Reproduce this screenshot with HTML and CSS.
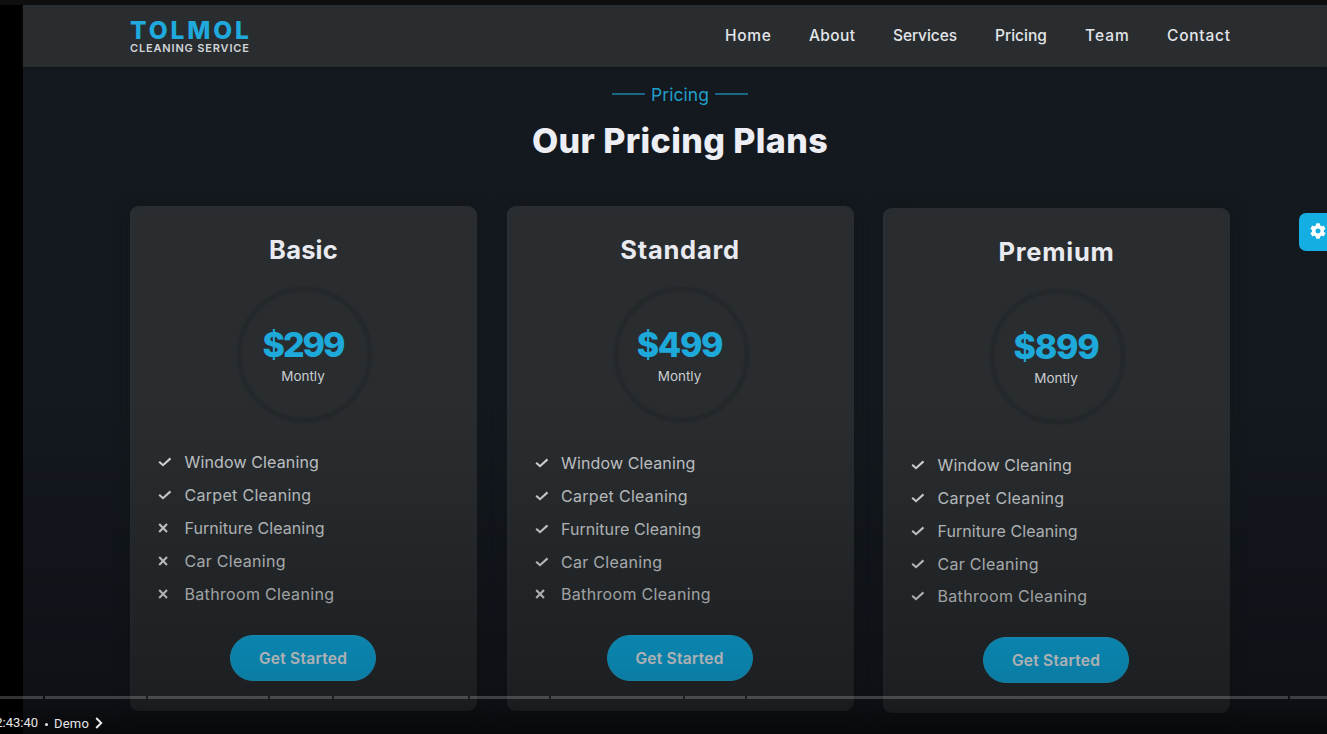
FILE: index.html
```html
<!DOCTYPE html>
<html lang="en">
<head>
<meta charset="utf-8">
<title>Our Pricing Plans</title>
<link rel="stylesheet" href="styles.css">
</head>
<body>
<svg class="defs" width="0" height="0">
  <symbol id="check" viewBox="0 0 14 10"><path d="M1.200 4.800 5 8.200 12.500 1.400"/></symbol>
  <symbol id="cross" viewBox="0 0 14 10"><path d="M1.200 1 9 9M9 1 1.200 9"/></symbol>
</svg>
<div class="player">
  <div class="page">
    <header class="header">
      <div class="container bar">
        <div class="logo"><span class="logo-name">TOLMOL</span><span class="logo-sub">CLEANING SERVICE</span></div>
        <nav class="nav">
          <a class="n-home">Home</a><a class="n-about">About</a><a class="n-services">Services</a><a class="n-pricing">Pricing</a><a class="n-team">Team</a><a class="n-contact">Contact</a>
        </nav>
      </div>
    </header>
    <main class="container">
      <div class="label"><i></i><span>Pricing</span><i></i></div>
      <h2 class="heading">Our Pricing Plans</h2>
      <div class="cards">
        <section class="card basic">
          <h3>Basic</h3>
          <div class="price"><strong>$299</strong><span>Montly</span></div>
          <ul>
            <li class="l-window"><svg><use href="#check"/></svg>Window Cleaning</li>
            <li class="l-carpet"><svg><use href="#check"/></svg>Carpet Cleaning</li>
            <li class="l-furniture"><svg><use href="#cross"/></svg>Furniture Cleaning</li>
            <li class="l-car"><svg><use href="#cross"/></svg>Car Cleaning</li>
            <li class="l-bath"><svg><use href="#cross"/></svg>Bathroom Cleaning</li>
          </ul>
          <a class="button">Get Started</a>
        </section>
        <section class="card standard">
          <h3>Standard</h3>
          <div class="price"><strong>$499</strong><span>Montly</span></div>
          <ul>
            <li class="l-window"><svg><use href="#check"/></svg>Window Cleaning</li>
            <li class="l-carpet"><svg><use href="#check"/></svg>Carpet Cleaning</li>
            <li class="l-furniture"><svg><use href="#check"/></svg>Furniture Cleaning</li>
            <li class="l-car"><svg><use href="#check"/></svg>Car Cleaning</li>
            <li class="l-bath"><svg><use href="#cross"/></svg>Bathroom Cleaning</li>
          </ul>
          <a class="button">Get Started</a>
        </section>
        <section class="card premium">
          <h3>Premium</h3>
          <div class="price"><strong>$899</strong><span>Montly</span></div>
          <ul>
            <li class="l-window"><svg><use href="#check"/></svg>Window Cleaning</li>
            <li class="l-carpet"><svg><use href="#check"/></svg>Carpet Cleaning</li>
            <li class="l-furniture"><svg><use href="#check"/></svg>Furniture Cleaning</li>
            <li class="l-car"><svg><use href="#check"/></svg>Car Cleaning</li>
            <li class="l-bath"><svg><use href="#check"/></svg>Bathroom Cleaning</li>
          </ul>
          <a class="button">Get Started</a>
        </section>
      </div>
    </main>
    <div class="settings"><svg viewBox="0 0 512 512"><path d="M487.400 315.700l-42.600-24.600c4.300-23.200 4.300-47 0-70.200l42.600-24.600c4.900-2.800 7.100-8.600 5.500-14-11.100-35.600-30-67.800-54.700-94.600-3.800-4.100-10-5.100-14.800-2.300L380.800 110c-17.900-15.400-38.500-27.300-60.800-35.100V25.800c0-5.600-3.900-10.500-9.400-11.700-36.700-8.200-74.300-7.800-109.200 0-5.500 1.200-9.400 6.100-9.400 11.700V75c-22.200 7.900-42.800 19.800-60.800 35.100L88.700 85.500c-4.900-2.800-11-1.900-14.800 2.300-24.700 26.700-43.600 58.900-54.700 94.600-1.700 5.400.6 11.200 5.500 14L67.300 221c-4.300 23.200-4.300 47 0 70.200l-42.600 24.600c-4.900 2.800-7.100 8.600-5.500 14 11.100 35.600 30 67.800 54.700 94.600 3.800 4.100 10 5.100 14.800 2.300l42.600-24.600c17.900 15.400 38.500 27.300 60.800 35.100v49.200c0 5.600 3.900 10.500 9.400 11.700 36.700 8.200 74.300 7.800 109.200 0 5.500-1.200 9.400-6.100 9.400-11.700v-49.200c22.200-7.900 42.800-19.800 60.800-35.100l42.600 24.600c4.900 2.800 11 1.900 14.800-2.300 24.700-26.700 43.600-58.900 54.700-94.600 1.500-5.500-.7-11.300-5.600-14.100zM256 336c-44.100 0-80-35.900-80-80s35.900-80 80-80 80 35.900 80 80-35.900 80-80 80z"/></svg></div>
  </div>
  <div class="controls">
    <div class="chapters"><i class="c1"></i><i class="c2"></i><i class="c3"></i><i class="c4"></i><i class="c5"></i><i class="c6"></i><i class="c7"></i><i class="c8"></i><i class="c9"></i><i class="c10"></i></div>
    <div class="status"><span class="time">2:43:40</span><span class="dot"></span><span class="chapter">Demo</span><svg viewBox="0 0 8 12"><path d="M1.200 1 6.200 6 1.200 11"/></svg></div>
  </div>
</div>
</body>
</html>
```
FILE: styles.css
```css
* { box-sizing: border-box; }
body { margin: 0; background: #000; overflow: hidden; }
.defs { display: block; }
.player {
  position: relative;
  height: 734px;
  padding: 5px 0 0 23px;
  background: linear-gradient(#0f0f0f 5px, #000 5px);
  overflow: hidden;
  font-family: Inter, "Liberation Sans", sans-serif;
}
.page { position: relative; height: 729px; background: #14181f; }
.container { width: 1100px; margin-left: 107px; }
.header { height: 62px; background: #292d30; box-shadow: 0 1px 3px #12161a; }
.bar { display: flex; justify-content: space-between; }
.logo { display: flex; flex-direction: column; padding-top: 15px; width: 124px; }
.logo-name { font-size: 24.5px; line-height: 21px; font-weight: 800; color: #1fa9dc; letter-spacing: 2.9px; white-space: nowrap; }
.logo-sub { font-size: 11px; line-height: 12px; margin-top: 1px; font-weight: 600; color: #d3d6da; letter-spacing: .84px; white-space: nowrap; }
.nav { display: flex; gap: 38px; margin-right: -1px; padding-top: 21px; font-size: 15.5px; line-height: 20px; font-weight: 500; color: #e3e5e9; }
.n-home { width: 46px; letter-spacing: .7px; }
.n-about { width: 46px; letter-spacing: .36px; }
.n-services { width: 64px; letter-spacing: -.08px; }
.n-pricing { width: 52px; }
.n-team { width: 44px; letter-spacing: 1px; }
.n-contact { width: 64px; letter-spacing: .76px; }
.label { display: flex; justify-content: center; align-items: center; gap: 6px; height: 22px; margin-top: 16px; font-size: 17.5px; color: #209fc8; letter-spacing: .07px; }
.label i { width: 33px; height: 2px; margin-top: -1px; background: #1b6686; }
.heading { margin: 14px 0 0; font-size: 34px; line-height: 44px; font-weight: 800; letter-spacing: .4px; text-align: center; color: #eceef3; }
.cards { display: grid; grid-template-columns: repeat(3, 347px); column-gap: 29.5px; margin-top: 43px; align-items: start; }
.card {
  display: flex;
  flex-direction: column;
  align-items: center;
  height: 505px;
  padding: 24px 28px 0;
  border-radius: 9px;
  background: #292d30;
  box-shadow: 0 0 14px #141819, inset 2px 0 3px #2b2f38;
}
.standard { margin-top: .4px; }
.premium { margin-top: 2.4px; }
h3 { margin: 0; font-size: 25.5px; line-height: 40px; font-weight: 700; color: #e8eaef; letter-spacing: .75px; }
.basic h3 { letter-spacing: .2px; }
.price {
  display: flex;
  flex-direction: column;
  align-items: center;
  width: 135px;
  height: 135px;
  margin: 17px -2px 0 0;
  padding: 36px 3px 0 0;
  border: 4px solid #24282b;
  border-radius: 50%;
  box-shadow: 0 0 2px #262a2d, inset 0 0 2px #262a2d;
}
.price strong { font-size: 34px; line-height: 36px; font-weight: 800; color: #1ea9db; letter-spacing: -1.3px; }
.basic strong { letter-spacing: -2px; }
.price span { margin-top: 3px; font-size: 13.5px; line-height: 20px; color: #c9cccf; }
ul { align-self: stretch; margin: 24px 0 0; padding: 0; list-style: none; }
li { display: flex; align-items: center; height: 32.900px; font-size: 16px; color: #c6c9cb; white-space: nowrap; }
li svg { width: 14px; height: 10px; margin-right: 12.500px; fill: none; stroke: #d8dbdd; stroke-width: 2.100; }
.l-window { letter-spacing: .14px; }
.l-carpet { letter-spacing: .3px; }
.l-furniture { letter-spacing: .07px; }
.l-car { letter-spacing: .29px; }
.l-bath { letter-spacing: .33px; }
.button {
  display: flex;
  align-items: center;
  justify-content: center;
  width: 146px;
  height: 46px;
  margin: 24.600px 1px 0 0;
  border-radius: 24px;
  border: 1px solid #20b0df;
  background: #0eaee5;
  font-size: 15.5px;
  font-weight: 600;
  letter-spacing: .27px;
  color: #edf0f4;
}
/* Settings tab clipped by the right edge of the video */
.settings { position: absolute; right: 0; top: 208px; display: flex; align-items: center; width: 28px; height: 38px; padding-left: 11px; border-radius: 7px 0 0 7px; background: #14aee2; }
.settings svg { width: 16px; height: 16px; flex: none; margin-top: -2px; fill: #fff; }
/* Player chrome drawn over the video */
.controls { position: absolute; inset: 390px 0 0; padding-top: 306px; background: linear-gradient(transparent, rgba(0,0,0,.05) 20%, rgba(0,0,0,.22) 65%, rgba(0,0,0,.29) 86%, rgba(0,0,0,.38) 92%, rgba(0,0,0,.65)); }
.chapters { display: flex; gap: 2px; height: 3px; }
.chapters i { background: rgba(255,255,255,.2); }
.c1 { width: 43px; }
.c2 { width: 101px; }
.c3 { width: 120px; }
.c4 { width: 62px; }
.c5 { width: 134px; }
.c6 { width: 79px; }
.c7 { width: 132px; }
.c8 { width: 60px; }
.c9 { width: 541px; }
.c10 { width: 37px; }
.status { display: flex; align-items: center; height: 20px; margin: 14px 0 0 -6px; font: 13px/20px Roboto, sans-serif; color: #e6e6e6; }
.time { display: flex; justify-content: flex-end; width: 44px; white-space: nowrap; }
.dot { width: 3px; height: 3px; margin: 2px 6px 0 7px; border-radius: 50%; background: #e6e6e6; }
.chapter { width: 41px; margin-top: 2px; letter-spacing: .2px; }
.status svg { width: 8px; height: 12px; fill: none; stroke: #eee; stroke-width: 1.900; }
```
